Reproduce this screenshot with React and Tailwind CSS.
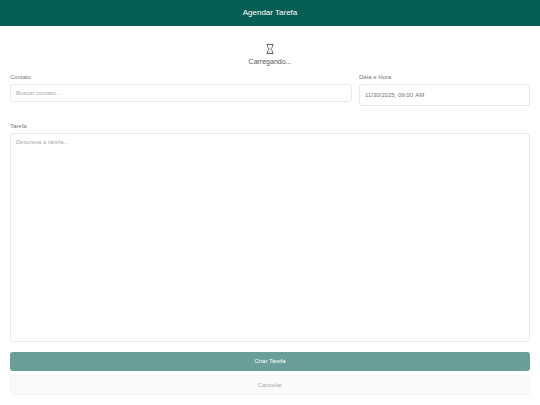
function HourglassIcon() {
  return (
    <svg className="w-2 h-2.5" viewBox="0 0 8 10" fill="none" stroke="#666666" aria-hidden="true">
      <path d="M0.5 0.5H7.5M0.5 9.5H7.5" />
      <path d="M1.5 0.5V2.6C1.5 4 3.3 4.2 3.3 5S1.5 6 1.5 7.4V9.5" />
      <path d="M6.5 0.5V2.6C6.5 4 4.7 4.2 4.7 5S6.5 6 6.5 7.4V9.5" />
      <path d="M2.6 8.6C2.8 7.9 3.4 7.6 4 7.4C4.6 7.6 5.2 7.9 5.4 8.6" strokeWidth="0.4" />
    </svg>
  )
}

function Field({ id, label, className = '', children }) {
  return (
    <div className={`flex flex-col gap-[3px] ${className}`}>
      <label htmlFor={id} className="text-[6px] leading-[8px] text-[#777777]">
        {label}
      </label>
      {children}
    </div>
  )
}

function App() {
  return (
    <div className="min-h-screen flex flex-col bg-white font-['Liberation_Sans',Arial,sans-serif]">
      <header className="bg-[#075e54] py-2 text-center">
        <h1 className="text-[8px] leading-[10px] text-white">Agendar Tarefa</h1>
      </header>

      <form className="flex-1 flex flex-col p-2.5" onSubmit={(e) => e.preventDefault()}>
        <div role="status" className="flex flex-col items-center gap-[3px] pt-2 pb-[6px]">
          <HourglassIcon />
          <p className="text-[7px] leading-[10px] text-[#555555]">Carregando...</p>
        </div>

        <div className="grid grid-cols-[2fr_1fr] items-start gap-[7px] mb-4">
          <Field id="contato" label="Contato">
            <input
              id="contato"
              type="text"
              placeholder="Buscar contato..."
              className="w-full h-[18px] px-[5px] border border-[#e8e8e8] rounded-[3px] text-[6px] text-[#777777] placeholder:text-[#aaaaaa] outline-none"
            />
          </Field>
          <Field id="data" label="Data e Hora">
            <input
              id="data"
              type="datetime-local"
              defaultValue="2025-11-30T09:00"
              className="w-full h-[22px] px-[5px] border border-[#e8e8e8] rounded-[3px] text-[6px] text-[#777777] outline-none [&::-webkit-calendar-picker-indicator]:hidden [&::-webkit-datetime-edit-month-field]:p-0 [&::-webkit-datetime-edit-day-field]:p-0 [&::-webkit-datetime-edit-year-field]:p-0 [&::-webkit-datetime-edit-hour-field]:p-0 [&::-webkit-datetime-edit-minute-field]:p-0 [&::-webkit-datetime-edit-meridiem-field]:p-0"
            />
          </Field>
        </div>

        <Field id="tarefa" label="Tarefa" className="flex-1">
          <textarea
            id="tarefa"
            placeholder="Descreva a tarefa..."
            className="flex-1 w-full resize-none px-[5px] py-1 border border-[#e8e8e8] rounded-[3px] text-[6px] leading-[8px] text-[#777777] placeholder:text-[#aaaaaa] outline-none"
          />
        </Field>

        <div className="flex flex-col gap-1 mt-2.5">
          <button type="submit" className="h-[19px] rounded-[3px] bg-[#6a9f99] text-[6px] text-white">
            Criar Tarefa
          </button>
          <button
            type="button"
            className="h-5 rounded-[3px] border border-[#f5f5f5] bg-[#fafafa] text-[6px] text-[#aaaaaa]"
          >
            Cancelar
          </button>
        </div>
      </form>
    </div>
  )
}

export default App
